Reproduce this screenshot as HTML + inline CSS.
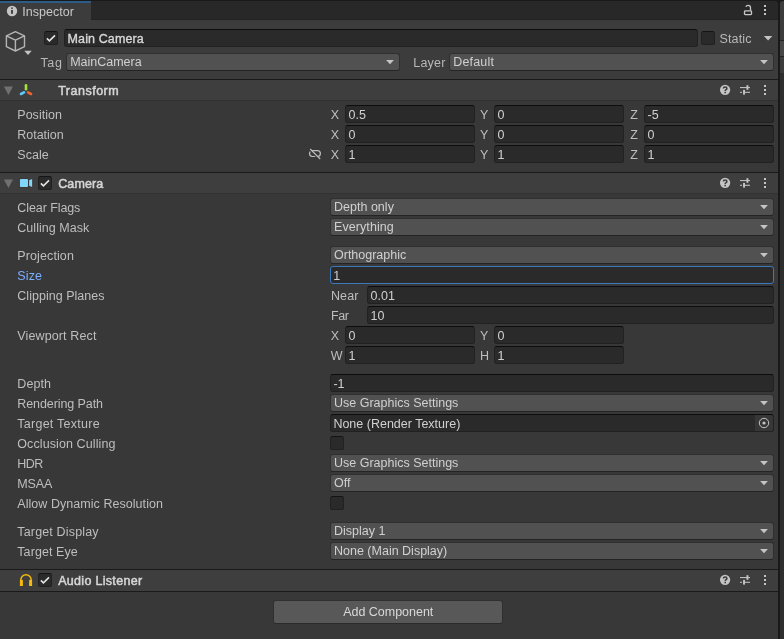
<!DOCTYPE html><html><head><meta charset="utf-8"><title>Inspector</title><style>
html,body{margin:0;padding:0}
body{width:784px;height:639px;overflow:hidden;background:#191919;position:relative;font-family:"Liberation Sans", sans-serif;font-size:12.5px}
div,svg,span{position:absolute;display:block}
span{white-space:pre;line-height:20px;height:20px}

</style></head><body>
<div style="left:0px;top:1px;width:778px;height:19px;background:#282828;border-top-right-radius:3px"></div>
<div style="left:0px;top:19px;width:778px;height:1px;background:#232323"></div>
<div style="left:0px;top:1px;width:91px;height:19px;background:#3c3c3c"></div>
<div style="left:0px;top:1px;width:91px;height:2px;background:#2c5d87"></div>
<div style="left:0px;top:20px;width:778px;height:59px;background:#3c3c3c"></div>
<div style="left:0px;top:79px;width:778px;height:560px;background:#383838"></div>
<div style="left:780px;top:1px;width:4px;height:39px;background:#3c3c3c;border-top-left-radius:3px"></div>
<div style="left:780px;top:40px;width:4px;height:1px;background:#232323"></div>
<div style="left:780px;top:41px;width:4px;height:15px;background:#474747"></div>
<div style="left:780px;top:56px;width:4px;height:1px;background:#232323"></div>
<div style="left:780px;top:57px;width:4px;height:16px;background:#3c3c3c"></div>
<div style="left:780px;top:73px;width:4px;height:566px;background:#2e2e2e"></div>
<svg style="left:6px;top:5px" width="12" height="12" viewBox="0 0 12 12"><circle cx="6" cy="6" r="5.2" fill="#c4c4c4"/><rect x="5.15" y="2.5" width="1.7" height="1.3" fill="#2e2e2e"/><rect x="5.15" y="5" width="1.7" height="3.8" fill="#2e2e2e"/></svg>
<svg style="left:742px;top:3px" width="12" height="14" viewBox="0 0 12 14"><rect x="2.5" y="7.9" width="7" height="3.7" rx="0.8" fill="none" stroke="#c8c8c8" stroke-width="1.35"/><path d="M3.9 3.9 C4.2 2.7 5.2 2.4 6.2 2.4 C7.8 2.4 8.5 3.3 8.5 4.8 L8.5 7.4" fill="none" stroke="#c8c8c8" stroke-width="1.3"/></svg>
<div style="left:764px;top:5px;width:2px;height:2px;background:#c4c4c4"></div>
<div style="left:764px;top:9px;width:2px;height:2px;background:#c4c4c4"></div>
<div style="left:764px;top:13px;width:2px;height:2px;background:#c4c4c4"></div>
<svg style="left:4px;top:29px" width="24" height="25" viewBox="0 0 24 25"><g fill="none" stroke="#b4b4b4" stroke-width="1.4" stroke-linejoin="round"><path d="M11.4 2.7 L20.5 6.9 L20.5 17.7 L11.4 22 L2.4 17.7 L2.4 6.9 Z"/><path d="M2.4 6.9 L11.4 11.1 L20.5 6.9 M11.4 11.1 L11.4 22"/></g></svg>
<svg style="left:24px;top:50px" width="9" height="6" viewBox="0 0 9 6"><path d="M0.3 0.8 L7.7 0.8 L4 5 Z" fill="#c4c4c4"/></svg>
<div style="left:44px;top:31px;width:14px;height:14px;background:#2a2a2a;border:1px solid #212121;border-top-color:#141414;border-radius:2.5px;box-sizing:border-box"></div>
<svg style="left:44px;top:31px" width="14" height="14" viewBox="0 0 14 14"><path d="M2.9 7.4 L5.4 9.9 L11 4.4" fill="none" stroke="#e4e4e4" stroke-width="1.6"/></svg>
<div style="left:64px;top:29px;width:634px;height:18px;background:#2a2a2a;border:1px solid #212121;border-top-color:#0d0d0d;border-radius:3px;box-sizing:border-box"></div>
<div style="left:701px;top:31px;width:14px;height:14px;background:#2a2a2a;border:1px solid #212121;border-top-color:#141414;border-radius:2.5px;box-sizing:border-box"></div>
<svg style="left:763px;top:35px" width="10" height="7" viewBox="0 0 10 7"><path d="M0.9 0.9 L9.3 0.9 L5.1 5.5 Z" fill="#c4c4c4"/></svg>
<div style="left:66px;top:53px;width:334px;height:18px;background:#515151;border:1px solid #303030;border-bottom-color:#242424;border-radius:3px;box-sizing:border-box"></div>
<svg style="left:385px;top:59px" width="10" height="7" viewBox="0 0 10 7"><path d="M1.1 1 L8.9 1 L5 5.35 Z" fill="#c4c4c4"/></svg>
<div style="left:449px;top:53px;width:325px;height:18px;background:#515151;border:1px solid #303030;border-bottom-color:#242424;border-radius:3px;box-sizing:border-box"></div>
<svg style="left:759px;top:59px" width="10" height="7" viewBox="0 0 10 7"><path d="M1.1 1 L8.9 1 L5 5.35 Z" fill="#c4c4c4"/></svg>
<div style="left:0px;top:79px;width:778px;height:1px;background:#1a1a1a"></div>
<div style="left:0px;top:80px;width:778px;height:21px;background:#3e3e3e"></div>
<div style="left:0px;top:100px;width:778px;height:1px;background:#323232"></div>
<svg style="left:3px;top:85px" width="11" height="10" viewBox="0 0 11 10"><path d="M0.9 1.6 L10 1.6 L5.45 9.9 Z" fill="#707070"/></svg>
<svg style="left:719px;top:84px" width="12" height="12" viewBox="0 0 12 12"><circle cx="6.1" cy="5.8" r="5.15" fill="#c4c4c4"/><path d="M4.4 4.5 C4.4 2.5 7.9 2.5 7.9 4.5 C7.9 5.7 6.2 5.7 6.2 7" fill="none" stroke="#3e3e3e" stroke-width="1.6"/><rect x="5.4" y="7.8" width="1.6" height="1.5" fill="#3e3e3e"/></svg>
<svg style="left:739px;top:84px" width="12" height="12" viewBox="0 0 12 12"><g fill="#c4c4c4"><rect x="1" y="3.05" width="10" height="1.05"/><rect x="7.45" y="1.2" width="1.95" height="4.6"/><rect x="1" y="7.75" width="2" height="1.05"/><rect x="4.05" y="5.9" width="1.95" height="4.7"/><rect x="6" y="7.75" width="5" height="1.05"/></g></svg>
<div style="left:764px;top:85px;width:2px;height:2px;background:#c4c4c4"></div>
<div style="left:764px;top:89px;width:2px;height:2px;background:#c4c4c4"></div>
<div style="left:764px;top:93px;width:2px;height:2px;background:#c4c4c4"></div>
<svg style="left:18px;top:82px" width="16" height="16" viewBox="0 0 16 16"><g stroke-linecap="round" stroke-width="2.6" fill="none"><path d="M8 3.2 L8 7.3" stroke="#a4e13c"/><path d="M6 10.3 L3 12" stroke="#5fc8fb"/><path d="M10 10.3 L13 12" stroke="#f0632f"/></g></svg>
<div style="left:345px;top:105px;width:130px;height:18px;background:#2a2a2a;border:1px solid #212121;border-top-color:#0d0d0d;border-radius:3px;box-sizing:border-box"></div>
<div style="left:494px;top:105px;width:130px;height:18px;background:#2a2a2a;border:1px solid #212121;border-top-color:#0d0d0d;border-radius:3px;box-sizing:border-box"></div>
<div style="left:644px;top:105px;width:130px;height:18px;background:#2a2a2a;border:1px solid #212121;border-top-color:#0d0d0d;border-radius:3px;box-sizing:border-box"></div>
<div style="left:345px;top:125px;width:130px;height:18px;background:#2a2a2a;border:1px solid #212121;border-top-color:#0d0d0d;border-radius:3px;box-sizing:border-box"></div>
<div style="left:494px;top:125px;width:130px;height:18px;background:#2a2a2a;border:1px solid #212121;border-top-color:#0d0d0d;border-radius:3px;box-sizing:border-box"></div>
<div style="left:644px;top:125px;width:130px;height:18px;background:#2a2a2a;border:1px solid #212121;border-top-color:#0d0d0d;border-radius:3px;box-sizing:border-box"></div>
<div style="left:345px;top:145px;width:130px;height:18px;background:#2a2a2a;border:1px solid #212121;border-top-color:#0d0d0d;border-radius:3px;box-sizing:border-box"></div>
<div style="left:494px;top:145px;width:130px;height:18px;background:#2a2a2a;border:1px solid #212121;border-top-color:#0d0d0d;border-radius:3px;box-sizing:border-box"></div>
<div style="left:644px;top:145px;width:130px;height:18px;background:#2a2a2a;border:1px solid #212121;border-top-color:#0d0d0d;border-radius:3px;box-sizing:border-box"></div>
<svg style="left:307px;top:147px" width="16" height="14" viewBox="0 0 16 14"><rect x="2.5" y="3.6" width="10.9" height="5.9" rx="2.95" fill="none" stroke="#bdbdbd" stroke-width="1.2"/><path d="M2.2 2.6 L12.2 12.6" stroke="#383838" stroke-width="1.4" fill="none"/><path d="M3.2 2 L13.2 12" stroke="#bdbdbd" stroke-width="1.1" fill="none"/></svg>
<div style="left:0px;top:172px;width:778px;height:1px;background:#1a1a1a"></div>
<div style="left:0px;top:173px;width:778px;height:21px;background:#3e3e3e"></div>
<div style="left:0px;top:193px;width:778px;height:1px;background:#323232"></div>
<svg style="left:3px;top:178px" width="11" height="10" viewBox="0 0 11 10"><path d="M0.9 1.6 L10 1.6 L5.45 9.9 Z" fill="#707070"/></svg>
<div style="left:38px;top:176px;width:14px;height:14px;background:#2a2a2a;border:1px solid #212121;border-top-color:#141414;border-radius:2.5px;box-sizing:border-box"></div>
<svg style="left:38px;top:176px" width="14" height="14" viewBox="0 0 14 14"><path d="M2.9 7.4 L5.4 9.9 L11 4.4" fill="none" stroke="#e4e4e4" stroke-width="1.6"/></svg>
<svg style="left:719px;top:177px" width="12" height="12" viewBox="0 0 12 12"><circle cx="6.1" cy="5.8" r="5.15" fill="#c4c4c4"/><path d="M4.4 4.5 C4.4 2.5 7.9 2.5 7.9 4.5 C7.9 5.7 6.2 5.7 6.2 7" fill="none" stroke="#3e3e3e" stroke-width="1.6"/><rect x="5.4" y="7.8" width="1.6" height="1.5" fill="#3e3e3e"/></svg>
<svg style="left:739px;top:177px" width="12" height="12" viewBox="0 0 12 12"><g fill="#c4c4c4"><rect x="1" y="3.05" width="10" height="1.05"/><rect x="7.45" y="1.2" width="1.95" height="4.6"/><rect x="1" y="7.75" width="2" height="1.05"/><rect x="4.05" y="5.9" width="1.95" height="4.7"/><rect x="6" y="7.75" width="5" height="1.05"/></g></svg>
<div style="left:764px;top:178px;width:2px;height:2px;background:#c4c4c4"></div>
<div style="left:764px;top:182px;width:2px;height:2px;background:#c4c4c4"></div>
<div style="left:764px;top:186px;width:2px;height:2px;background:#c4c4c4"></div>
<svg style="left:19px;top:178px" width="14" height="10" viewBox="0 0 14 10"><g fill="#80d6fa" stroke="#38302f" stroke-width="0.7" paint-order="stroke"><rect x="0.95" y="0.95" width="8.05" height="8.15" rx="1"/><path d="M10.1 2.3 L13.15 0.95 L13.15 9.1 L10.1 7.8 Z"/></g></svg>
<div style="left:330px;top:198px;width:444px;height:18px;background:#515151;border:1px solid #303030;border-bottom-color:#242424;border-radius:3px;box-sizing:border-box"></div>
<svg style="left:759px;top:204px" width="10" height="7" viewBox="0 0 10 7"><path d="M1.1 1 L8.9 1 L5 5.35 Z" fill="#c4c4c4"/></svg>
<div style="left:330px;top:218px;width:444px;height:18px;background:#515151;border:1px solid #303030;border-bottom-color:#242424;border-radius:3px;box-sizing:border-box"></div>
<svg style="left:759px;top:224px" width="10" height="7" viewBox="0 0 10 7"><path d="M1.1 1 L8.9 1 L5 5.35 Z" fill="#c4c4c4"/></svg>
<div style="left:330px;top:246px;width:444px;height:18px;background:#515151;border:1px solid #303030;border-bottom-color:#242424;border-radius:3px;box-sizing:border-box"></div>
<svg style="left:759px;top:252px" width="10" height="7" viewBox="0 0 10 7"><path d="M1.1 1 L8.9 1 L5 5.35 Z" fill="#c4c4c4"/></svg>
<div style="left:330px;top:266px;width:444px;height:18px;background:#2a2a2a;border:1px solid #3a79bb;border-radius:3px;box-sizing:border-box"></div>
<div style="left:367px;top:286px;width:407px;height:18px;background:#2a2a2a;border:1px solid #212121;border-top-color:#0d0d0d;border-radius:3px;box-sizing:border-box"></div>
<div style="left:367px;top:306px;width:407px;height:18px;background:#2a2a2a;border:1px solid #212121;border-top-color:#0d0d0d;border-radius:3px;box-sizing:border-box"></div>
<div style="left:345px;top:326px;width:130px;height:18px;background:#2a2a2a;border:1px solid #212121;border-top-color:#0d0d0d;border-radius:3px;box-sizing:border-box"></div>
<div style="left:494px;top:326px;width:130px;height:18px;background:#2a2a2a;border:1px solid #212121;border-top-color:#0d0d0d;border-radius:3px;box-sizing:border-box"></div>
<div style="left:345px;top:346px;width:130px;height:18px;background:#2a2a2a;border:1px solid #212121;border-top-color:#0d0d0d;border-radius:3px;box-sizing:border-box"></div>
<div style="left:494px;top:346px;width:130px;height:18px;background:#2a2a2a;border:1px solid #212121;border-top-color:#0d0d0d;border-radius:3px;box-sizing:border-box"></div>
<div style="left:330px;top:374px;width:444px;height:18px;background:#2a2a2a;border:1px solid #212121;border-top-color:#0d0d0d;border-radius:3px;box-sizing:border-box"></div>
<div style="left:330px;top:394px;width:444px;height:18px;background:#515151;border:1px solid #303030;border-bottom-color:#242424;border-radius:3px;box-sizing:border-box"></div>
<svg style="left:759px;top:400px" width="10" height="7" viewBox="0 0 10 7"><path d="M1.1 1 L8.9 1 L5 5.35 Z" fill="#c4c4c4"/></svg>
<div style="left:330px;top:414px;width:444px;height:18px;background:#2a2a2a;border:1px solid #212121;border-top-color:#0d0d0d;border-radius:3px;box-sizing:border-box"></div>
<div style="left:755px;top:415px;width:18px;height:16px;background:#373737;border-radius:0 2px 2px 0"></div>
<svg style="left:758px;top:417px" width="12" height="12" viewBox="0 0 12 12"><circle cx="6" cy="6" r="4.7" fill="none" stroke="#c4c4c4" stroke-width="1"/><circle cx="6" cy="6" r="1.6" fill="#c4c4c4"/></svg>
<div style="left:330px;top:436px;width:14px;height:14px;background:#2a2a2a;border:1px solid #212121;border-top-color:#141414;border-radius:2.5px;box-sizing:border-box"></div>
<div style="left:330px;top:454px;width:444px;height:18px;background:#515151;border:1px solid #303030;border-bottom-color:#242424;border-radius:3px;box-sizing:border-box"></div>
<svg style="left:759px;top:460px" width="10" height="7" viewBox="0 0 10 7"><path d="M1.1 1 L8.9 1 L5 5.35 Z" fill="#c4c4c4"/></svg>
<div style="left:330px;top:474px;width:444px;height:18px;background:#515151;border:1px solid #303030;border-bottom-color:#242424;border-radius:3px;box-sizing:border-box"></div>
<svg style="left:759px;top:480px" width="10" height="7" viewBox="0 0 10 7"><path d="M1.1 1 L8.9 1 L5 5.35 Z" fill="#c4c4c4"/></svg>
<div style="left:330px;top:496px;width:14px;height:14px;background:#2a2a2a;border:1px solid #212121;border-top-color:#141414;border-radius:2.5px;box-sizing:border-box"></div>
<div style="left:330px;top:522px;width:444px;height:18px;background:#515151;border:1px solid #303030;border-bottom-color:#242424;border-radius:3px;box-sizing:border-box"></div>
<svg style="left:759px;top:528px" width="10" height="7" viewBox="0 0 10 7"><path d="M1.1 1 L8.9 1 L5 5.35 Z" fill="#c4c4c4"/></svg>
<div style="left:330px;top:542px;width:444px;height:18px;background:#515151;border:1px solid #303030;border-bottom-color:#242424;border-radius:3px;box-sizing:border-box"></div>
<svg style="left:759px;top:548px" width="10" height="7" viewBox="0 0 10 7"><path d="M1.1 1 L8.9 1 L5 5.35 Z" fill="#c4c4c4"/></svg>
<div style="left:0px;top:569px;width:778px;height:1px;background:#1a1a1a"></div>
<div style="left:0px;top:570px;width:778px;height:21px;background:#3e3e3e"></div>
<div style="left:38px;top:573px;width:14px;height:14px;background:#2a2a2a;border:1px solid #212121;border-top-color:#141414;border-radius:2.5px;box-sizing:border-box"></div>
<svg style="left:38px;top:573px" width="14" height="14" viewBox="0 0 14 14"><path d="M2.9 7.4 L5.4 9.9 L11 4.4" fill="none" stroke="#e4e4e4" stroke-width="1.6"/></svg>
<svg style="left:719px;top:574px" width="12" height="12" viewBox="0 0 12 12"><circle cx="6.1" cy="5.8" r="5.15" fill="#c4c4c4"/><path d="M4.4 4.5 C4.4 2.5 7.9 2.5 7.9 4.5 C7.9 5.7 6.2 5.7 6.2 7" fill="none" stroke="#3e3e3e" stroke-width="1.6"/><rect x="5.4" y="7.8" width="1.6" height="1.5" fill="#3e3e3e"/></svg>
<svg style="left:739px;top:574px" width="12" height="12" viewBox="0 0 12 12"><g fill="#c4c4c4"><rect x="1" y="3.05" width="10" height="1.05"/><rect x="7.45" y="1.2" width="1.95" height="4.6"/><rect x="1" y="7.75" width="2" height="1.05"/><rect x="4.05" y="5.9" width="1.95" height="4.7"/><rect x="6" y="7.75" width="5" height="1.05"/></g></svg>
<div style="left:764px;top:575px;width:2px;height:2px;background:#c4c4c4"></div>
<div style="left:764px;top:579px;width:2px;height:2px;background:#c4c4c4"></div>
<div style="left:764px;top:583px;width:2px;height:2px;background:#c4c4c4"></div>
<div style="left:0px;top:591px;width:778px;height:1px;background:#1a1a1a"></div>
<svg style="left:19px;top:573px" width="14" height="14" viewBox="0 0 14 14"><path d="M1.8 12.6 L1.8 7 A5.2 5.2 0 0 1 12.2 7 L12.2 12.6" fill="none" stroke="#f5ba0a" stroke-width="1.5"/><rect x="0.9" y="6.9" width="3" height="6.1" fill="#f5ba0a"/><rect x="10.1" y="6.9" width="3" height="6.1" fill="#f5ba0a"/></svg>
<div style="left:273px;top:600px;width:230px;height:24px;background:#585858;border:1px solid #303030;border-bottom-color:#2b2b2b;border-radius:3px;box-sizing:border-box"></div>
<div id="tx" style="left:0;top:0;width:784px;height:639px;will-change:transform">
<span style="left:22.30px;top:1.60px;color:#c8c8c8;letter-spacing:0.031px;">Inspector</span>
<span style="left:67.60px;top:28.60px;color:#d8d8d8;letter-spacing:0.106px;-webkit-text-stroke:0.35px #d8d8d8;">Main Camera</span>
<span style="left:719.50px;top:28.60px;color:#b8b8b8;letter-spacing:0.139px;">Static</span>
<span style="left:40.50px;top:52.60px;color:#b8b8b8;letter-spacing:0.615px;">Tag</span>
<span style="left:70.20px;top:51.60px;color:#d0d0d0;letter-spacing:-0.016px;">MainCamera</span>
<span style="left:413.30px;top:52.60px;color:#b8b8b8;letter-spacing:0.184px;">Layer</span>
<span style="left:453.20px;top:51.60px;color:#d0d0d0;letter-spacing:0.184px;">Default</span>
<span style="left:58.20px;top:80.60px;color:#d6d6d6;letter-spacing:0.500px;-webkit-text-stroke:0.5px #d6d6d6;">Transform</span>
<span style="left:17.30px;top:104.60px;color:#bebebe;letter-spacing:0.014px;">Position</span>
<span style="left:330.80px;top:104.60px;color:#bebebe;">X</span>
<span style="left:348.50px;top:104.60px;color:#d0d0d0;">0.5</span>
<span style="left:479.90px;top:104.60px;color:#bebebe;">Y</span>
<span style="left:497.50px;top:104.60px;color:#d0d0d0;">0</span>
<span style="left:630.20px;top:104.60px;color:#bebebe;">Z</span>
<span style="left:647.50px;top:104.60px;color:#d0d0d0;">-5</span>
<span style="left:17.30px;top:124.60px;color:#bebebe;letter-spacing:-0.020px;">Rotation</span>
<span style="left:330.80px;top:124.60px;color:#bebebe;">X</span>
<span style="left:348.50px;top:124.60px;color:#d0d0d0;">0</span>
<span style="left:479.90px;top:124.60px;color:#bebebe;">Y</span>
<span style="left:497.50px;top:124.60px;color:#d0d0d0;">0</span>
<span style="left:630.20px;top:124.60px;color:#bebebe;">Z</span>
<span style="left:647.50px;top:124.60px;color:#d0d0d0;">0</span>
<span style="left:17.30px;top:144.60px;color:#bebebe;letter-spacing:0.064px;">Scale</span>
<span style="left:330.80px;top:144.60px;color:#bebebe;">X</span>
<span style="left:348.50px;top:144.60px;color:#d0d0d0;">1</span>
<span style="left:479.90px;top:144.60px;color:#bebebe;">Y</span>
<span style="left:497.50px;top:144.60px;color:#d0d0d0;">1</span>
<span style="left:630.20px;top:144.60px;color:#bebebe;">Z</span>
<span style="left:647.50px;top:144.60px;color:#d0d0d0;">1</span>
<span style="left:58.20px;top:173.60px;color:#d6d6d6;letter-spacing:0.122px;-webkit-text-stroke:0.5px #d6d6d6;">Camera</span>
<span style="left:17.30px;top:197.60px;color:#bebebe;letter-spacing:-0.084px;">Clear Flags</span>
<span style="left:334.00px;top:196.60px;color:#d0d0d0;letter-spacing:0.013px;">Depth only</span>
<span style="left:17.30px;top:217.60px;color:#bebebe;letter-spacing:0.036px;">Culling Mask</span>
<span style="left:334.00px;top:216.60px;color:#d0d0d0;letter-spacing:0.084px;">Everything</span>
<span style="left:17.30px;top:245.60px;color:#bebebe;letter-spacing:0.111px;">Projection</span>
<span style="left:334.00px;top:244.60px;color:#d0d0d0;letter-spacing:-0.005px;">Orthographic</span>
<span style="left:17.30px;top:265.60px;color:#7baeff;letter-spacing:0.118px;">Size</span>
<span style="left:333.20px;top:265.60px;color:#d0d0d0;">1</span>
<span style="left:17.30px;top:285.60px;color:#bebebe;letter-spacing:0.029px;">Clipping Planes</span>
<span style="left:331.00px;top:285.60px;color:#bebebe;letter-spacing:0.077px;">Near</span>
<span style="left:370.50px;top:285.60px;color:#d0d0d0;">0.01</span>
<span style="left:331.00px;top:305.60px;color:#bebebe;letter-spacing:-0.383px;">Far</span>
<span style="left:370.50px;top:305.60px;color:#d0d0d0;">10</span>
<span style="left:17.30px;top:325.60px;color:#bebebe;letter-spacing:0.124px;">Viewport Rect</span>
<span style="left:330.80px;top:325.60px;color:#bebebe;">X</span>
<span style="left:348.50px;top:325.60px;color:#d0d0d0;">0</span>
<span style="left:479.90px;top:325.60px;color:#bebebe;">Y</span>
<span style="left:497.50px;top:325.60px;color:#d0d0d0;">0</span>
<span style="left:330.80px;top:345.60px;color:#bebebe;">W</span>
<span style="left:348.50px;top:345.60px;color:#d0d0d0;">1</span>
<span style="left:479.90px;top:345.60px;color:#bebebe;">H</span>
<span style="left:497.50px;top:345.60px;color:#d0d0d0;">1</span>
<span style="left:17.30px;top:373.60px;color:#bebebe;letter-spacing:0.068px;">Depth</span>
<span style="left:333.40px;top:373.60px;color:#d0d0d0;">-1</span>
<span style="left:17.30px;top:393.60px;color:#bebebe;letter-spacing:-0.084px;">Rendering Path</span>
<span style="left:334.00px;top:392.60px;color:#d0d0d0;">Use Graphics Settings</span>
<span style="left:17.30px;top:413.60px;color:#bebebe;letter-spacing:0.258px;">Target Texture</span>
<span style="left:333.40px;top:413.60px;color:#d0d0d0;">None (Render Texture)</span>
<span style="left:17.30px;top:433.60px;color:#bebebe;letter-spacing:0.095px;">Occlusion Culling</span>
<span style="left:17.30px;top:453.60px;color:#bebebe;letter-spacing:-0.531px;">HDR</span>
<span style="left:334.00px;top:452.60px;color:#d0d0d0;">Use Graphics Settings</span>
<span style="left:17.30px;top:473.60px;color:#bebebe;letter-spacing:-0.134px;">MSAA</span>
<span style="left:334.00px;top:472.60px;color:#d0d0d0;">Off</span>
<span style="left:17.30px;top:493.60px;color:#bebebe;letter-spacing:0.049px;">Allow Dynamic Resolution</span>
<span style="left:17.30px;top:521.60px;color:#bebebe;letter-spacing:0.157px;">Target Display</span>
<span style="left:334.00px;top:520.60px;color:#d0d0d0;">Display 1</span>
<span style="left:17.30px;top:541.60px;color:#bebebe;letter-spacing:0.073px;">Target Eye</span>
<span style="left:334.00px;top:540.60px;color:#d0d0d0;">None (Main Display)</span>
<span style="left:58.20px;top:570.60px;color:#d6d6d6;letter-spacing:0.306px;-webkit-text-stroke:0.5px #d6d6d6;">Audio Listener</span>
<span style="left:343.25px;top:602.00px;color:#d8d8d8;letter-spacing:-0.026px;">Add Component</span>
</div>
</body></html>
